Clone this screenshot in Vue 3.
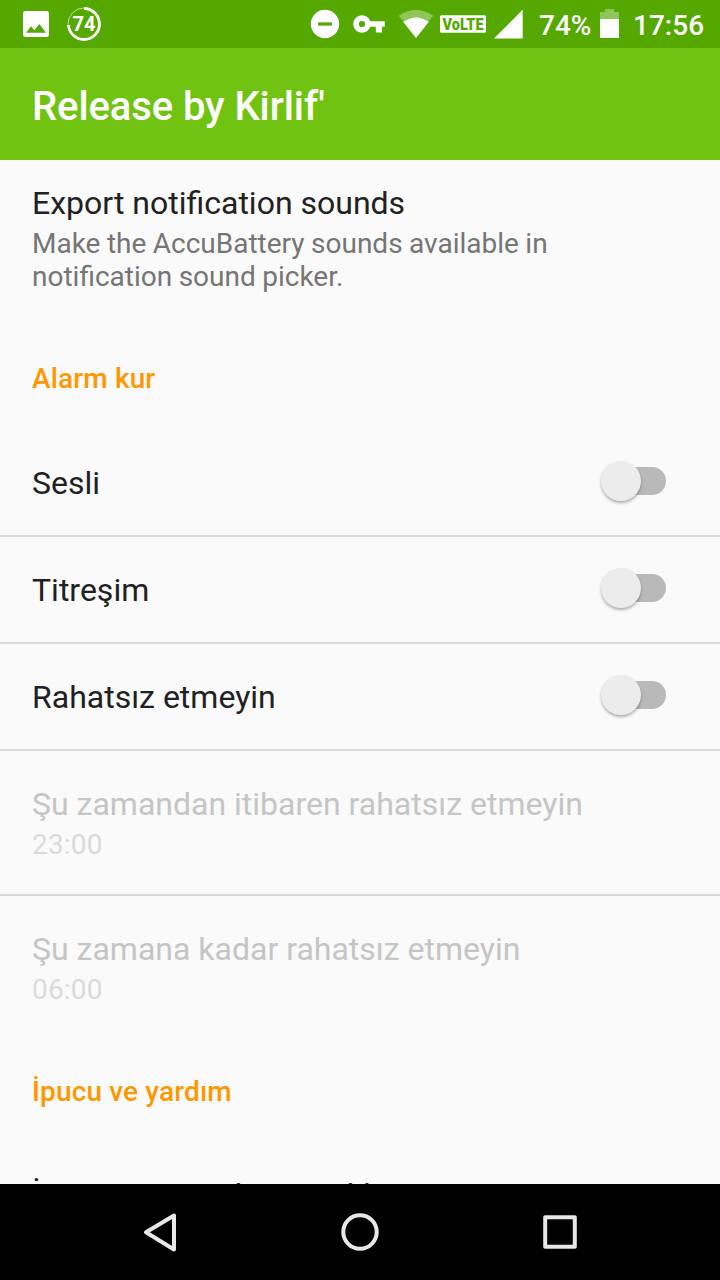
<script setup>
import { ref } from 'vue'

const alarmRows = ref([
  { title: 'Sesli', on: false },
  { title: 'Titreşim', on: false },
  { title: 'Rahatsız etmeyin', on: false },
])

const timeRows = [
  { title: 'Şu zamandan itibaren rahatsız etmeyin', time: '23:00' },
  { title: 'Şu zamana kadar rahatsız etmeyin', time: '06:00' },
]
</script>

<template>
  <div class="app">
    <header class="status-bar">
      <svg class="icons-left" width="110" height="48" viewBox="0 0 110 48">
        <path fill="#fff" fill-rule="evenodd" d="M25.500 11h21a2.500 2.500 0 0 1 2.500 2.500v21a2.500 2.500 0 0 1-2.500 2.500H25.500a2.500 2.500 0 0 1-2.500-2.500V13.500a2.500 2.500 0 0 1 2.500-2.500zM26 32.700h20l-6.600-8.700-5.100 6.300-3.300-4.100z" />
        <circle cx="84" cy="24" r="16" fill="none" stroke="#fff" stroke-opacity=".6" stroke-width="1" />
        <path d="M84 8.500A15.500 15.500 0 1 1 68.500 25" fill="none" stroke="#fff" stroke-width="2.800" />
        <text x="84" y="31" text-anchor="middle" textLength="23" lengthAdjust="spacingAndGlyphs" class="badge-num">74</text>
      </svg>
      <svg class="icons-right" width="220" height="48" viewBox="305 0 220 48">
        <circle cx="325" cy="24" r="14.200" fill="#fff" />
        <rect x="318" y="22.400" width="14" height="3.200" fill="#54a800" />
        <path fill="#fff" fill-rule="evenodd" d="M370.200 21.300A8.700 8.700 0 1 0 370.200 26.700H375.800V32.400H382V26.700H384.800V21.300zM362 20.900a3.100 3.100 0 1 1 0 6.200 3.100 3.100 0 0 1 0-6.200z" />
        <path fill="#fff" fill-opacity=".35" d="M416 38L398.800 15.800Q416 4.200 433.200 15.800z" />
        <path fill="#fff" d="M416 38L403.300 22Q416 13 428.700 22z" />
        <rect x="440" y="15.300" width="46" height="17.500" rx="1.500" fill="#fff" />
        <text x="463" y="29.700" text-anchor="middle" textLength="41" lengthAdjust="spacingAndGlyphs" class="volte">VoLTE</text>
        <path fill="#fff" d="M494 38.400L522.700 9.800V38.400z" />
      </svg>
      <span class="percent">74%</span>
      <svg class="battery" width="20" height="30" viewBox="0 0 20 30">
        <path fill="#fff" fill-opacity=".35" d="M0 3h5V0h9v3h5v7H0z" />
        <path fill="#fff" d="M0 10h19v19H0z" />
      </svg>
      <span class="clock">17:56</span>
    </header>

    <div class="toolbar">Release by Kirlif'</div>

    <main class="content">
      <div class="item export">
        <div class="title">Export notification sounds</div>
        <div class="summary">Make the AccuBattery sounds available in<br />notification sound picker.</div>
      </div>

      <div class="category">Alarm kur</div>

      <div v-for="row in alarmRows" :key="row.title" class="item row" @click="row.on = !row.on">
        <div class="title">{{ row.title }}</div>
        <div class="switch" :class="{ on: row.on }"><div class="thumb"></div></div>
      </div>

      <div v-for="row in timeRows" :key="row.title" class="item time disabled">
        <div class="title">{{ row.title }}</div>
        <div class="summary">{{ row.time }}</div>
      </div>

      <div class="category tips">İpucu ve yardım</div>
      <div class="item last">
        <div class="title">İpucu pencerelerini sakla</div>
      </div>
    </main>

    <nav class="nav-bar">
      <svg width="720" height="96" viewBox="0 0 720 96" fill="none" stroke="#e8e8e8" stroke-width="4" stroke-linejoin="round">
        <path d="M174 31.500V65.500L146 48.300z" />
        <circle cx="360" cy="48" r="16.700" />
        <rect x="545.200" y="33.200" width="29.600" height="29.600" />
      </svg>
    </nav>
  </div>
</template>

<style>
body {
  margin: 0;
}
</style>

<style scoped>
.app {
  width: 720px;
  height: 1280px;
  display: flex;
  flex-direction: column;
  overflow: hidden;
  font-family: Roboto, sans-serif;
  background: #fafafa;
  color: #212121;
}

.status-bar {
  height: 48px;
  flex-shrink: 0;
  display: flex;
  background: #54a800;
  color: #fff;
  font-size: 28px;
  font-weight: 500;
  line-height: 52px;
}
.icons-right { margin-left: 195px; }
.percent { margin-left: 14px; width: 61px; }
.battery { margin-top: 9px; }
.clock { margin-left: 13px; }
.badge-num { fill: #fff; font-size: 20px; font-weight: 700; }
.volte { fill: #54a800; font-size: 16px; font-weight: 900; }

.toolbar {
  height: 112px;
  flex-shrink: 0;
  box-sizing: border-box;
  padding: 3px 32px 0;
  background: #70c411;
  color: #fff;
  font-size: 40px;
  font-weight: 500;
  line-height: 112px;
  letter-spacing: -0.1px;
}

.content {
  flex: 1;
  min-height: 0;
  overflow: hidden;
}
.item { box-sizing: border-box; padding: 0 32px; }
.title { font-size: 32px; line-height: 38px; white-space: nowrap; }
.summary { font-size: 28px; line-height: 33px; color: #757575; }
.export { height: 166px; padding-top: 24px; }
.export .summary { margin-top: 5px; word-spacing: -0.5px; }

.category {
  height: 104px;
  box-sizing: border-box;
  padding: 36px 32px 0;
  color: #ff9800;
  font-size: 28px;
  font-weight: 500;
  line-height: 33px;
  letter-spacing: 0.14px;
}

.row {
  height: 107px;
  display: flex;
  align-items: center;
  justify-content: space-between;
  padding-right: 54px;
  border-bottom: 2px solid #dadada;
}
.switch {
  position: relative;
  width: 56px;
  height: 28px;
  margin-top: -4px;
  border-radius: 14px;
  background: #b9b9b9;
}
.thumb {
  position: absolute;
  left: -9px;
  top: -6px;
  width: 40px;
  height: 40px;
  border-radius: 50%;
  background: #ececec;
  box-shadow: 0 2px 3px rgba(0, 0, 0, 0.3);
}
.switch.on .thumb { left: 25px; }

.time { height: 143px; padding-top: 34px; }
.time .summary { margin-top: 5px; letter-spacing: 0.2px; }
.time + .time { height: 145px; border-top: 2px solid #dadada; }
.disabled { color: #c5c5c5; }
.disabled .summary { color: #dadada; }
.tips { height: 105px; }
.last { padding-top: 32px; }
.last .title { letter-spacing: 0.16px; }

.nav-bar { height: 96px; flex-shrink: 0; background: #000; }
</style>
